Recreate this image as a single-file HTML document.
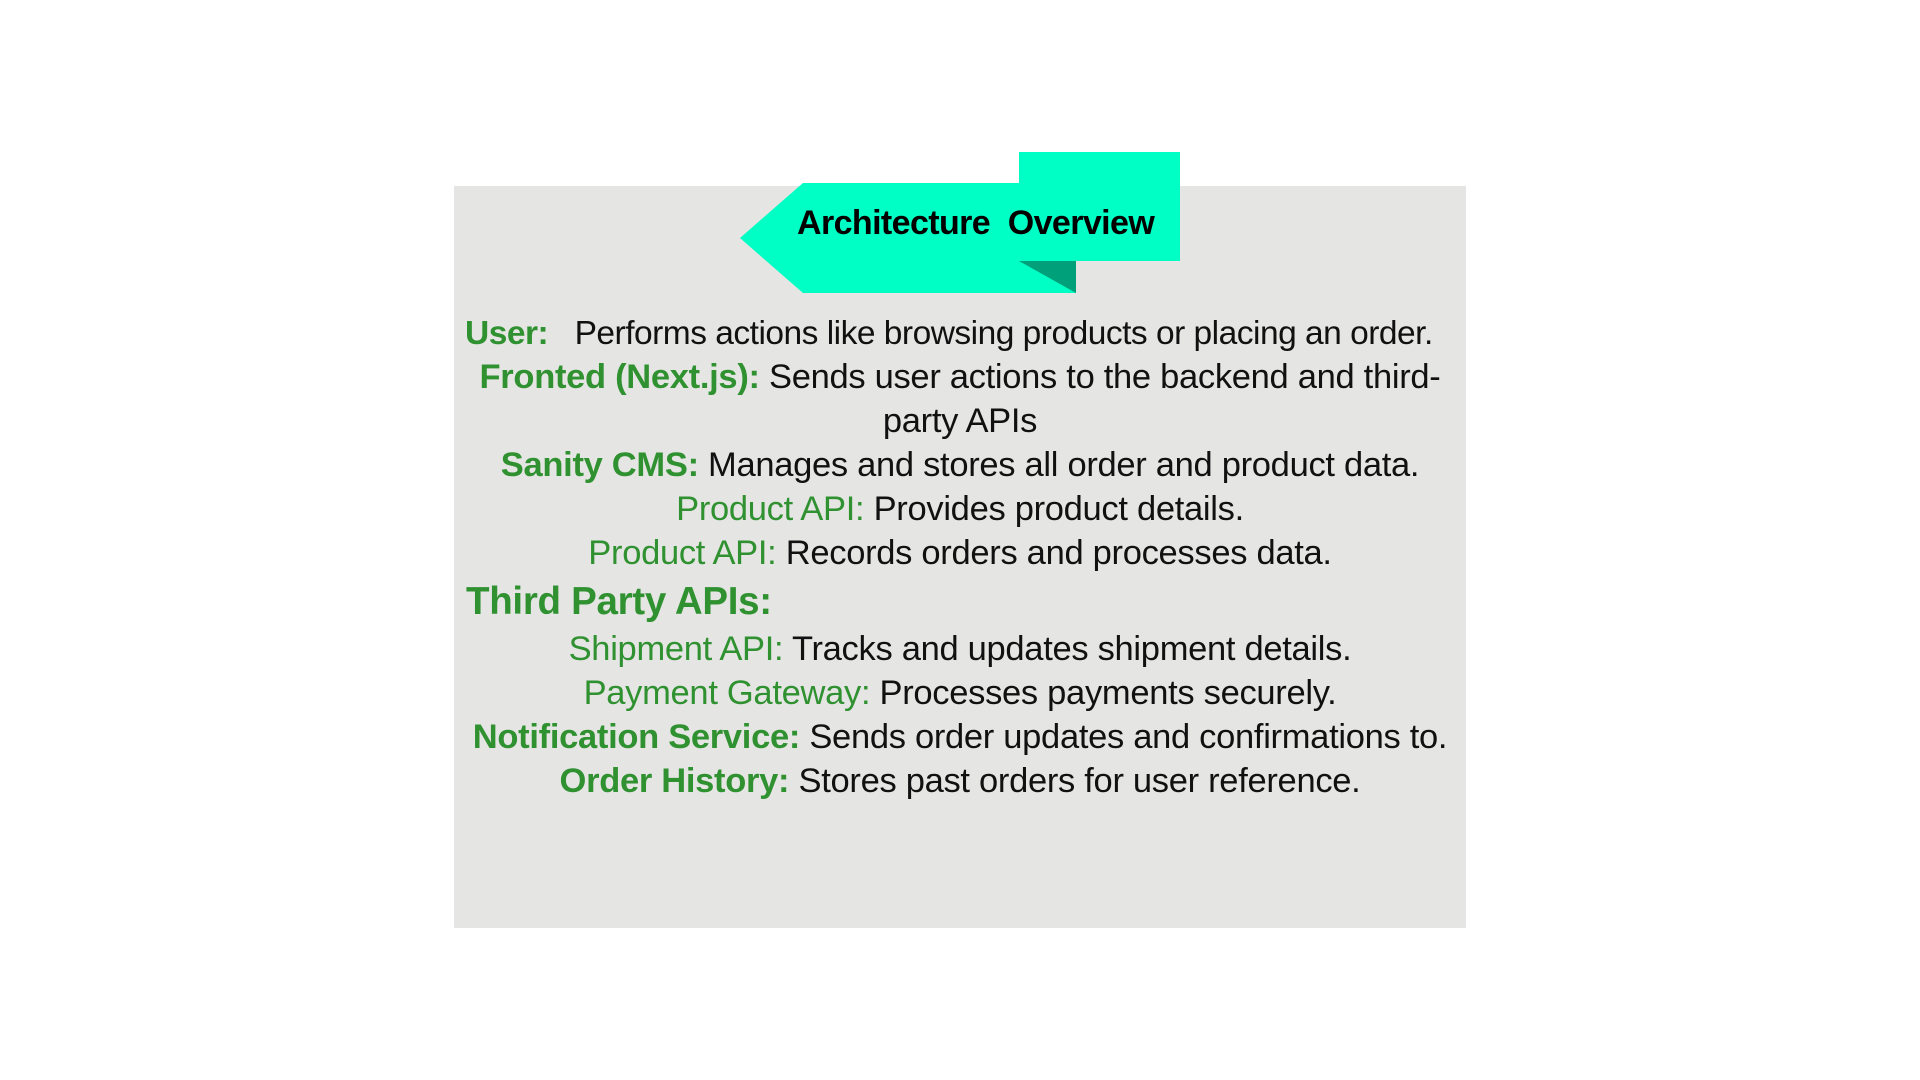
<!DOCTYPE html>
<html><head><meta charset="utf-8"><style>
html,body{margin:0;padding:0;background:#fff;width:1920px;height:1080px;overflow:hidden;font-family:"Liberation Sans",sans-serif}
.box{position:absolute;left:454px;top:186px;width:1012px;height:742px;background:#e5e5e4}
.l{position:absolute;left:454px;width:1012px;text-align:center;font-size:34.5px;line-height:44px;color:#111;white-space:nowrap;letter-spacing:-0.3px}
.g{color:#2f9130}
.b{font-weight:bold}
</style></head><body>
<div class="box"></div>
<svg style="position:absolute;left:0;top:0" width="1920" height="1080">
<polygon points="740,238 803,183 1076,183 1076,293 803,293" fill="#00ffc4"/>
<rect x="1019" y="152" width="161" height="109" fill="#00ffc4"/>
<polygon points="1019,261 1076,261 1076,293" fill="#00a07a"/>
</svg>
<div style="position:absolute;left:797px;top:201px;font-size:34px;font-weight:bold;line-height:44px;color:#000;white-space:nowrap;letter-spacing:-0.6px">Architecture&nbsp; Overview</div>
<div class="l" style="top:312px;text-align:left;left:465px;font-size:33.5px;letter-spacing:-0.5px"><span class="g b">User:</span>&nbsp;&nbsp; Performs actions like browsing products or placing an order.</div>
<div class="l" style="top:355px"><span class="g b">Fronted (Next.js):</span> Sends user actions to the backend and third-</div>
<div class="l" style="top:399px">party APIs</div>
<div class="l" style="top:443px"><span class="g b">Sanity CMS:</span> Manages and stores all order and product data.</div>
<div class="l" style="top:487px"><span class="g">Product API:</span> Provides product details.</div>
<div class="l" style="top:531px"><span class="g">Product API:</span> Records orders and processes data.</div>
<div class="l g b" style="top:580px;text-align:left;left:466px;font-size:38.5px">Third Party APIs:</div>
<div class="l" style="top:627px"><span class="g">Shipment API:</span> Tracks and updates shipment details.</div>
<div class="l" style="top:671px"><span class="g">Payment Gateway:</span> Processes payments securely.</div>
<div class="l" style="top:715px"><span class="g b">Notification Service:</span> Sends order updates and confirmations to.</div>
<div class="l" style="top:759px"><span class="g b">Order History:</span> Stores past orders for user reference.</div>
</body></html>
